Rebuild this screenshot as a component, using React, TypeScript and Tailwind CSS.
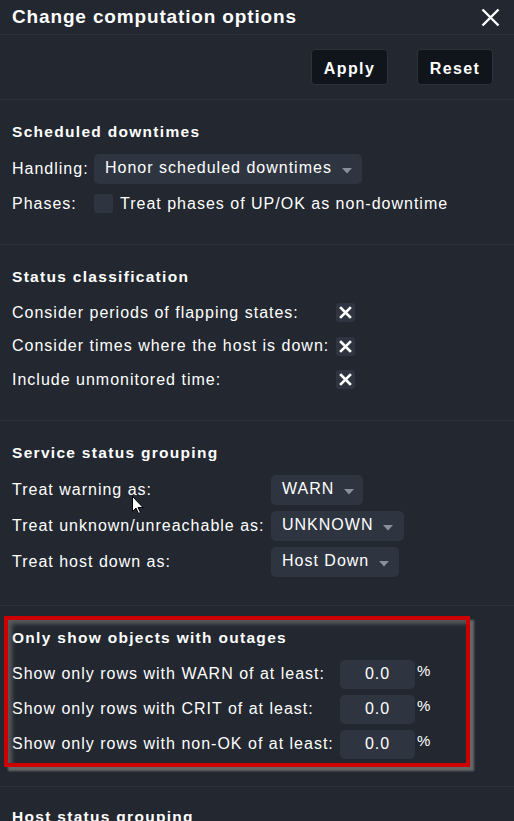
import type { ReactNode } from "react";

const FONT = { fontFamily: '"Liberation Sans", Arial, sans-serif' };

function Caret() {
  return (
    <svg width="10" height="6" viewBox="0 0 10 6" className="ml-[10px] mt-[4px]">
      <path d="M0 0 L10 0 L5 5.5 Z" fill="#8a9099" />
    </svg>
  );
}

function Select({ value, width }: { value: string; width: string }) {
  return (
    <div
      className={`flex h-[30px] items-center rounded-[5px] bg-[#2e3540] pl-[11px] text-[16px] text-white ${width}`}
    >
      <span className="-mt-[2px]">{value}</span>
      <Caret />
    </div>
  );
}

function CheckX() {
  return (
    <div className="flex h-[19px] w-[19px] items-center justify-center rounded-[3px] bg-[#2e3540]">
      <svg width="13" height="13" viewBox="0 0 13 13">
        <path d="M2 2 L11 11 M11 2 L2 11" stroke="white" strokeWidth="2.6" strokeLinecap="square" />
      </svg>
    </div>
  );
}

function Section({ title, children, pb }: { title: string; children: ReactNode; pb: string }) {
  return (
    <section className={`relative border-b border-[#2b313a] px-[12px] pt-[20px] ${pb}`}>
      <h2 className="flex h-[24px] items-center text-[15.5px] font-bold tracking-[1.3px] text-white">{title}</h2>
      <div className="mt-[7px]">{children}</div>
    </section>
  );
}

function Row({ h, label, labelW, children }: { h: string; label: string; labelW: string; children: ReactNode }) {
  return (
    <div className={`flex items-center ${h}`}>
      <span className={`shrink-0 ${labelW}`}>{label}</span>
      {children}
    </div>
  );
}

function Percent() {
  return (
    <>
      <div className="flex h-[29px] w-[75px] items-center justify-center rounded-[5px] bg-[#2e3540] text-white">
        0.0
      </div>
      <span className="ml-[2px] -mt-[6px] text-[15px] tracking-normal">%</span>
    </>
  );
}

export default function App() {
  return (
    <div
      className="relative h-[821px] w-[514px] overflow-hidden bg-[#222730] text-[16px] tracking-[1px] text-white"
      style={FONT}
    >
      <header className="flex h-[35px] items-center justify-between border-b border-[#2b313a] pl-[12px] pr-[14px]">
        <h1 className="text-[19px] font-bold tracking-[0.85px]">Change computation options</h1>
        <svg width="19" height="19" viewBox="0 0 19 19">
          <path d="M1.5 1.5 L17.5 17.5 M17.5 1.5 L1.5 17.5" stroke="white" strokeWidth="2.4" />
        </svg>
      </header>

      <div className="flex h-[65px] items-start justify-end gap-[29px] border-b border-[#2b313a] pr-[21px] pt-[14px]">
        <button
          type="button"
          className="h-[36px] w-[77px] rounded-[4px] border border-[#2c323b] bg-[#10151b] pt-[3px] text-[16px] font-bold tracking-[1.4px] text-white"
        >
          Apply
        </button>
        <button
          type="button"
          className="h-[36px] w-[76px] rounded-[4px] border border-[#2c323b] bg-[#10151b] pt-[3px] text-[16px] font-bold tracking-[1.4px] text-white"
        >
          Reset
        </button>
      </div>

      <Section title="Scheduled downtimes" pb="pb-[23px]">
        <Row h="h-[35px]" label="Handling:" labelW="w-[82px]">
          <Select value="Honor scheduled downtimes" width="w-[268px]" />
        </Row>
        <Row h="h-[35px]" label="Phases:" labelW="w-[82px]">
          <div className="h-[19px] w-[19px] rounded-[3px] bg-[#2e3540]" />
          <span className="ml-[7px]">Treat phases of UP/OK as non-downtime</span>
        </Row>
      </Section>

      <Section title="Status classification" pb="pb-[23px]">
        <Row h="h-[33.5px]" label="Consider periods of flapping states:" labelW="w-[324px]">
          <CheckX />
        </Row>
        <Row h="h-[33.5px]" label="Consider times where the host is down:" labelW="w-[324px]">
          <CheckX />
        </Row>
        <Row h="h-[33.5px]" label="Include unmonitored time:" labelW="w-[324px]">
          <CheckX />
        </Row>
      </Section>

      <Section title="Service status grouping" pb="pb-[25px]">
        <Row h="h-[36px]" label="Treat warning as:" labelW="w-[259px]">
          <Select value="WARN" width="w-[92px]" />
        </Row>
        <Row h="h-[36px]" label="Treat unknown/unreachable as:" labelW="w-[259px]">
          <Select value="UNKNOWN" width="w-[133px]" />
        </Row>
        <Row h="h-[36px]" label="Treat host down as:" labelW="w-[259px]">
          <Select value="Host Down" width="w-[128px]" />
        </Row>
      </Section>

      <Section title="Only show objects with outages" pb="pb-[24px]">
        <Row h="h-[35px]" label="Show only rows with WARN of at least:" labelW="w-[328px]">
          <Percent />
        </Row>
        <Row h="h-[35px]" label="Show only rows with CRIT of at least:" labelW="w-[328px]">
          <Percent />
        </Row>
        <Row h="h-[35px]" label="Show only rows with non-OK of at least:" labelW="w-[328px]">
          <Percent />
        </Row>
        <div className="pointer-events-none absolute left-[4px] top-[10px] h-[151px] w-[466px] border-4 border-[#cc0000] shadow-[4px_4px_2px_rgba(110,110,110,0.9),inset_4px_4px_4px_rgba(110,110,110,0.7)]" />
      </Section>

      <section className="px-[12px] pt-[18px]">
        <h2 className="flex h-[24px] items-center text-[15.5px] font-bold tracking-[1.3px] text-white">
          Host status grouping
        </h2>
      </section>

      <svg className="pointer-events-none absolute left-[132px] top-[496px]" width="12" height="19" viewBox="0 0 12 19">
        <path d="M0.5 0.5 L0.5 15.5 L4 12 L6.5 17.5 L8.5 16.5 L6 11.5 L11 11.5 Z" fill="white" stroke="black" strokeWidth="1" />
      </svg>
    </div>
  );
}
